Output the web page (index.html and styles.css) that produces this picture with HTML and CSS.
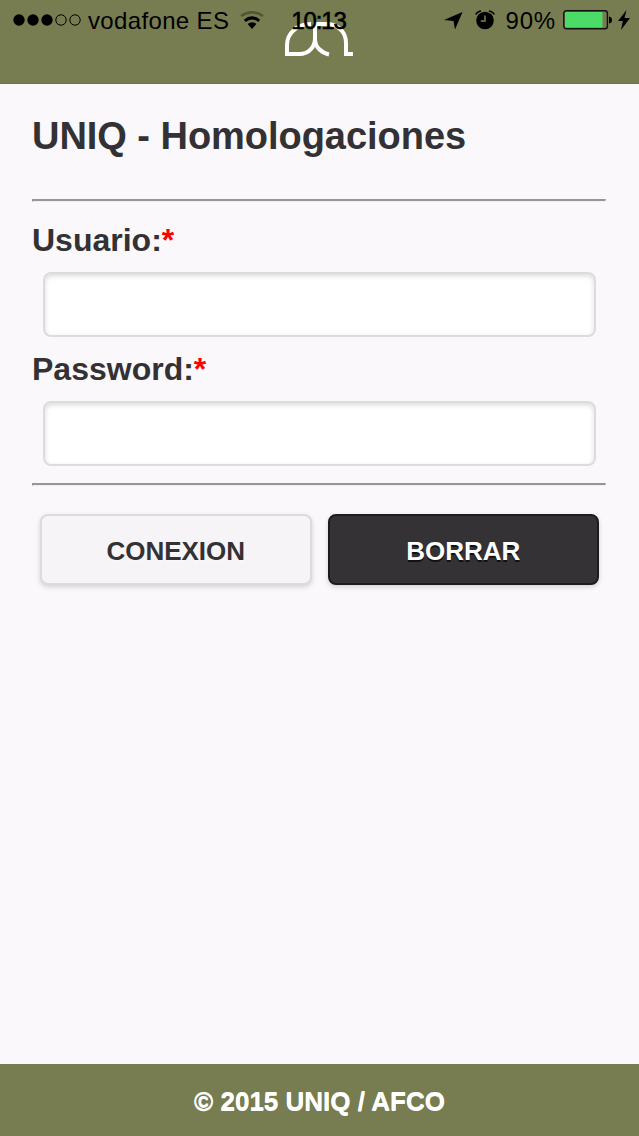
FILE: index.html
```html
<!DOCTYPE html>
<html lang="es">
<head>
<meta charset="utf-8">
<title>UNIQ - Homologaciones</title>
<link rel="stylesheet" href="styles.css">
</head>
<body>
<div class="page">
  <header class="header">
    <svg class="logo" width="72" height="44" viewBox="0 0 72 44" fill="none" stroke="#fff" stroke-width="4">
      <path d="M27 10Q16 10 10 16Q3 22 3 31V40H15Q23 40 27 35Q31 31 31 24V10H45Q53 11 58 17Q62 22 62 29V40H69"/>
      <path d="M31 25Q31 31 35 35Q39 39 45 40.5"/>
    </svg>
    <div class="status">
      <div class="carrier">
        <svg width="68" height="12" viewBox="0 0 68 12">
          <circle cx="6" cy="6" r="5.7"/><circle cx="20" cy="6" r="5.7"/><circle cx="34" cy="6" r="5.7"/>
          <g fill="none" stroke="#000"><circle cx="48" cy="6" r="5.2"/><circle cx="62" cy="6" r="5.2"/></g>
        </svg>
        <span class="network">vodafone ES</span>
        <svg class="wifi" width="24" height="20" viewBox="0 0 24 20">
          <path d="M1 6Q12-1.5 23 6" fill="none" stroke="#525633" stroke-width="2.6"/>
          <path d="M4.8 10.8Q12 5 19.2 10.8" fill="none" stroke="#000" stroke-width="3"/>
          <path d="M7.6 14Q12 10.5 16.4 14L12 19Z"/>
        </svg>
      </div>
      <span class="time">10:13</span>
      <div class="indicators">
        <svg class="location" width="19" height="18" viewBox="0 0 19 18"><path d="M18.5 0L11 17.5L9.5 9L0 8Z"/></svg>
        <svg class="alarm" width="20" height="20" viewBox="0 0 20 20">
          <circle cx="10" cy="10.5" r="8.8"/>
          <path d="M.8 4.5Q2 1.7 6 1M19.2 4.5Q18 1.7 14 1" fill="none" stroke="#000" stroke-width="1.6"/>
          <path d="M10 5.5V11H5.8" fill="none" stroke="#777d50" stroke-width="1.5"/>
        </svg>
        <span class="percent">90%</span>
        <svg class="battery" width="49" height="20" viewBox="0 0 49 20">
          <rect x=".8" y=".8" width="43.6" height="18" rx="2.5" fill="none" stroke="#111" stroke-width="1.4"/>
          <rect x="2" y="2" width="37.5" height="15.6" rx="1" fill="#4bdb67"/>
          <path d="M46 6.5Q49 7 49 10T46 13.5Z"/>
        </svg>
        <svg width="12" height="20" viewBox="0 0 12 20"><path d="M8.5 0L0 11H4.8L3 20L12 8H6.5Z"/></svg>
      </div>
    </div>
  </header>
  <main class="content">
    <h1 class="title">UNIQ - Homologaciones</h1>
    <hr class="rule">
    <form class="form">
      <label class="label" for="user">Usuario:<span class="required">*</span></label>
      <input class="field" id="user" type="text">
      <label class="label label-password" for="pass">Password:<span class="required">*</span></label>
      <input class="field" id="pass" type="password">
      <hr class="rule rule-bottom">
      <div class="actions">
        <button class="button" type="button">CONEXION</button>
        <button class="button button-dark" type="button">BORRAR</button>
      </div>
    </form>
  </main>
  <footer class="footer">© 2015 UNIQ / AFCO</footer>
</div>
</body>
</html>
```
FILE: styles.css
```css
* { box-sizing: border-box; }
body {
  margin: 0;
  font-family: "Liberation Sans", Arial, sans-serif;
  color: #333134;
  background: #faf8fb;
}
svg { display: block; flex: none; }
.page { display: flex; flex-direction: column; height: 1136px; }
.header {
  position: relative;
  display: flex;
  justify-content: center;
  height: 84px;
  padding-top: 14px;
  background: #777d50;
  border-bottom: 1px solid #6d7252;
}
.logo { margin-left: 1px; }
.status {
  position: absolute;
  inset: 0 0 auto;
  display: flex;
  align-items: center;
  justify-content: space-between;
  height: 40px;
  padding: 0 9px 0 13px;
  font-size: 24px;
  color: #000;
}
.carrier, .indicators { display: flex; align-items: center; white-space: nowrap; }
.carrier { width: 274px; }
.network { margin-left: 7px; padding-top: 2px; letter-spacing: .35px; }
.wifi { margin-left: 11px; }
.time { padding-top: 2px; letter-spacing: -1.1px; -webkit-text-stroke: .6px #000; }
.indicators { width: 280px; justify-content: flex-end; }
.location { margin-top: 2px; }
.alarm { margin-left: 12px; }
.percent { margin: 0 7px 0 11px; padding-top: 2px; letter-spacing: .8px; }
.battery { margin-right: 6px; }
.content { flex: 1; padding: 30px 33px 0 32px; }
.title { margin: 0 0 41px; font-size: 38px; line-height: 44px; letter-spacing: -.04px; }
.rule {
  height: 3px;
  margin: 0;
  border: solid;
  border-width: 2px 1px 1px;
  border-color: #98959a #e4e2e5 #f1eff2 #98959a;
}
.form { display: flex; flex-direction: column; }
.label { margin: 19px 0 13px; font-size: 32px; font-weight: bold; line-height: 38px; }
.label-password { margin: 13px 0; }
.required { color: #f00; }
.field {
  height: 65px;
  margin: 0 10px 0 11px;
  border: 2px solid #dddbde;
  border-radius: 8px;
  background: #fff;
  box-shadow: inset 0 2px 5px rgba(0, 0, 0, .15);
}
.rule-bottom { margin-top: 17px; }
.actions { display: grid; grid-template-columns: 1fr 1fr; gap: 16px; padding: 28px 7px 0 8px; }
.button {
  height: 71px;
  padding: 3px 0 0;
  font: bold 26px "Liberation Sans", Arial, sans-serif;
  color: #333134;
  background: #f6f4f7;
  border: 2px solid #dddbde;
  border-radius: 8px;
  box-shadow: 0 2px 5px rgba(0, 0, 0, .16);
  text-shadow: 0 2px 0 #f9f7fa;
}
.button-dark {
  color: #fff;
  background: #353235;
  border-color: #1e1b1f;
  text-shadow: 0 2px 0 #111;
}
.footer {
  height: 72px;
  padding-top: 1px;
  background: #777d50;
  color: #fff;
  font-size: 26px;
  font-weight: bold;
  line-height: 72px;
  text-align: center;
  text-shadow: 0 1px 0 #fff;
}
```
